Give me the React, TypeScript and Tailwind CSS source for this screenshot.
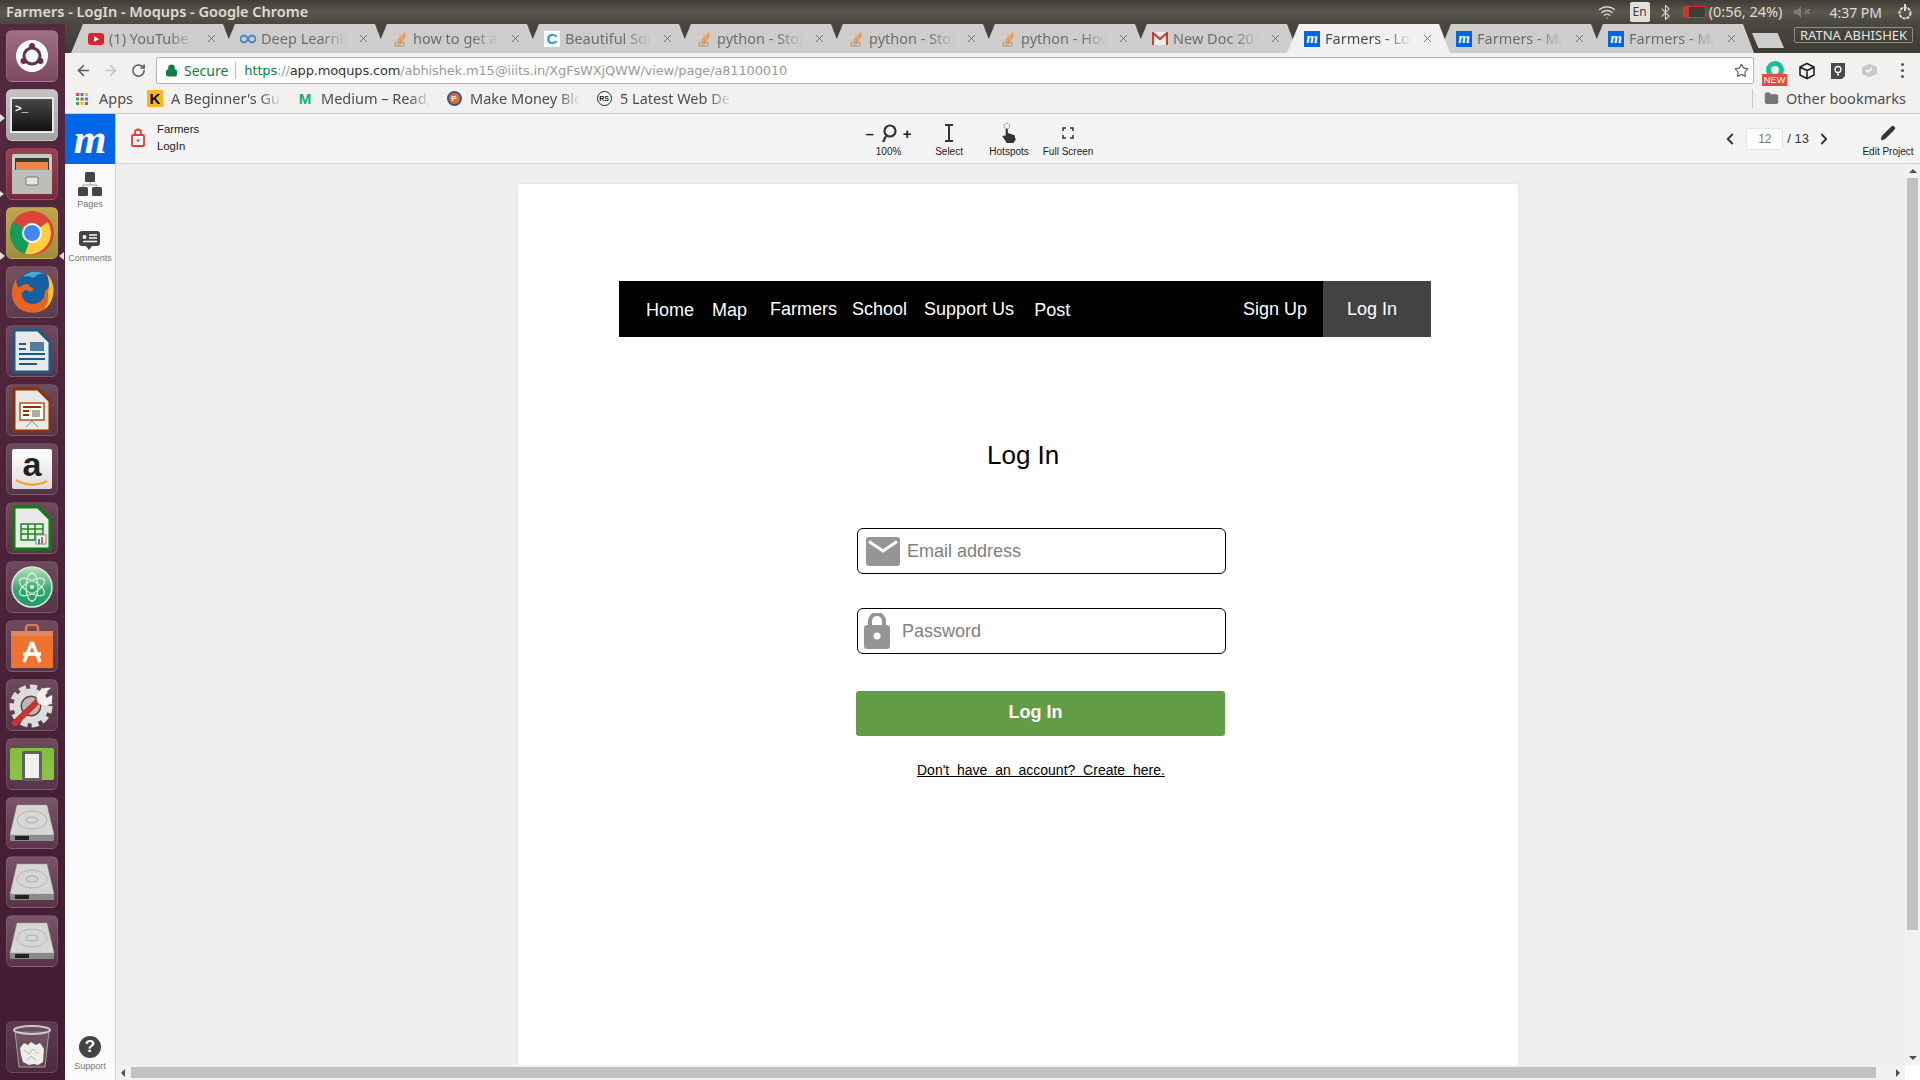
import { ReactNode } from "react";
import {
  ArrowLeft,
  ArrowRight,
  Bluetooth,
  ChevronLeft,
  ChevronRight,
  Folder,
  Lock,
  Pencil,
  RotateCw,
  Star,
  Wifi,
  X,
} from "lucide-react";

const UI_FONT = "font-['Noto_Sans','Open_Sans',sans-serif]";

const Tile = ({ children, bg = "from-[#7a5468] to-[#5a3448]" }: { children: ReactNode; bg?: string }) => (
  <div className={`w-[52px] h-[52px] mb-[7px] rounded-[6px] bg-gradient-to-b ${bg} border border-white/10 flex items-center justify-center overflow-hidden shrink-0`}>
    {children}
  </div>
);

const DiskIcon = () => (
  <svg width="46" height="38" viewBox="0 0 46 38">
    <path d="M8 1h30l7 30H1z" fill="#d6d6d4" stroke="#aaa" strokeWidth=".5" />
    <ellipse cx="23" cy="16" rx="15" ry="9" fill="none" stroke="#b5b5b3" />
    <ellipse cx="23" cy="16" rx="6" ry="3" fill="none" stroke="#a8a8a6" />
    <path d="M1 31h44v5a1 1 0 0 1-1 1H2a1 1 0 0 1-1-1z" fill="#8b8b89" />
    <rect x="6" y="32" width="14" height="4" fill="#222" />
  </svg>
);

const Launcher = () => (
  <div className="w-[65px] shrink-0 bg-gradient-to-b from-[#54293f] to-[#431c31] flex flex-col items-center pt-[6px] pr-[1px] relative">
    <Tile bg="from-[#a06f83] to-[#7d4c62]">
      <svg width="34" height="34" viewBox="0 0 34 34">
        <circle cx="17" cy="17" r="16" fill="#fff" />
        <circle cx="17" cy="17" r="8" fill="none" stroke="#62324a" strokeWidth="3" />
        <circle cx="17" cy="7" r="3" fill="#62324a" />
        <circle cx="8.5" cy="22" r="3" fill="#62324a" />
        <circle cx="25.5" cy="22" r="3" fill="#62324a" />
      </svg>
    </Tile>
    <Tile bg="from-[#c4c4c2] to-[#a3a3a1]">
      <div className="w-[44px] h-[36px] bg-gradient-to-b from-[#4a4a4a] to-[#111] border-2 border-[#e5e5e5] flex items-start p-[3px]">
        <span className="text-white text-[11px] leading-[14px] font-bold font-['Liberation_Mono',monospace]">&gt;_</span>
      </div>
    </Tile>
    <Tile bg="from-[#9a4050] to-[#7b2a3d]">
      <svg width="42" height="42" viewBox="0 0 42 42">
        <rect x="1" y="1" width="40" height="40" rx="2" fill="#c8c8c4" />
        <rect x="4" y="5" width="34" height="12" fill="#3a3a38" />
        <rect x="5" y="9" width="32" height="8" fill="#e98a4c" />
        <rect x="1" y="17" width="40" height="24" fill="#bdbdb9" />
        <rect x="15" y="24" width="12" height="8" rx="1" fill="#e6e6e4" stroke="#777" />
      </svg>
    </Tile>
    <Tile bg="from-[#bda64e] to-[#a08c3e]">
      <svg width="44" height="44" viewBox="0 0 44 44">
        <circle cx="22" cy="22" r="22" fill="#db4437" />
        <path d="M22 22 3 11a22 22 0 0 0 12 32z" fill="#0f9d58" />
        <path d="M22 22 15 43a22 22 0 0 0 26-21 22 22 0 0 0-3-11z" fill="#ffcd40" />
        <circle cx="22" cy="22" r="10" fill="#fff" />
        <circle cx="22" cy="22" r="8" fill="#4285f4" />
      </svg>
    </Tile>
    <Tile bg="from-[#77505f] to-[#5c3b4a]">
      <svg width="46" height="46" viewBox="0 0 46 46">
        <circle cx="25" cy="20" r="18" fill="#17609f" />
        <path d="M14 8c4-5 14-7 21-3-5-1-8 1-10 4-4-2-8-2-11-1z" fill="#4aa5dd" />
        <path d="M7 10C1 20 1 33 11 40c9 6 23 5 29-4 5-7 5-17 1-25 0 5-2 9-5 11 0 8-5 13-12 13-6 0-11-4-11-9 0-3 2-5 5-5l3 2c2-1 4-2 4-3-3-1-5-3-6-5-3 0-7 1-9 4-2-3-3-6-3-9z" fill="#e8641f" />
        <path d="M38 5c5 5 8 13 6 21-1 6-4 11-9 14 4-5 5-11 4-17 2-6 1-12-1-18z" fill="#fcc22e" />
      </svg>
    </Tile>
    <Tile bg="from-[#6f4a5c] to-[#563548]">
      <svg width="40" height="46" viewBox="0 0 40 46">
        <path d="M2 2h24l12 12v30H2z" fill="#e9e9e7" stroke="#1c5a88" strokeWidth="3" />
        <path d="M7 16h7M7 21h7M7 26h26M7 31h26M7 36h18" stroke="#1c5a88" strokeWidth="2" />
        <rect x="18" y="14" width="14" height="9" fill="#4d7ea8" />
      </svg>
    </Tile>
    <Tile bg="from-[#6f4a5c] to-[#563548]">
      <svg width="40" height="46" viewBox="0 0 40 46">
        <path d="M2 2h24l12 12v30H2z" fill="#e9e9e7" stroke="#8b3206" strokeWidth="3" />
        <rect x="8" y="16" width="24" height="17" fill="#fff" stroke="#b5511c" strokeWidth="1.5" />
        <path d="M11 20h18M11 24h6M11 28h6" stroke="#8b3206" strokeWidth="2" />
        <rect x="20" y="23" width="8" height="7" fill="#9fb69a" />
        <path d="M14 40l6-6 6 6" stroke="#888" fill="none" />
      </svg>
    </Tile>
    <Tile bg="from-[#6f4a5c] to-[#563548]">
      <div className="w-[40px] h-[40px] rounded-[2px] bg-gradient-to-b from-white to-[#dcdcdc] flex flex-col items-center">
        <span className="text-[#222] text-[34px] leading-[30px] font-bold font-['Liberation_Sans',sans-serif]">a</span>
        <svg width="36" height="8" viewBox="0 0 36 8">
          <path d="M2 1c9 6 22 6 31 1" stroke="#f90" strokeWidth="2" fill="none" />
        </svg>
      </div>
    </Tile>
    <Tile bg="from-[#6f4a5c] to-[#563548]">
      <svg width="40" height="46" viewBox="0 0 40 46">
        <path d="M2 2h24l12 12v30H2z" fill="#e9e9e7" stroke="#107c10" strokeWidth="3" />
        <path d="M9 19h22v16H9zM9 24h22M9 29h22M16 19v16M23 19v16" fill="none" stroke="#1b8a1b" strokeWidth="1.5" />
        <rect x="24" y="30" width="10" height="9" fill="#fff" stroke="#888" />
        <rect x="26" y="34" width="2" height="5" fill="#2a8ad4" />
        <rect x="29" y="32" width="2" height="7" fill="#e0672a" />
      </svg>
    </Tile>
    <Tile bg="from-[#6f4a5c] to-[#563548]">
      <svg width="42" height="42" viewBox="0 0 42 42">
        <defs>
          <linearGradient id="atomBg" x1="0" y1="0" x2="0" y2="1">
            <stop offset="0" stopColor="#b9e3bd" />
            <stop offset=".6" stopColor="#2fa56d" />
            <stop offset="1" stopColor="#1f9a63" />
          </linearGradient>
        </defs>
        <circle cx="21" cy="21" r="20" fill="url(#atomBg)" stroke="#dfe8e0" strokeWidth="1.5" />
        <g fill="none" stroke="#d5efd9" strokeWidth="1.3">
          <ellipse cx="21" cy="21" rx="14" ry="6" transform="rotate(30 21 21)" />
          <ellipse cx="21" cy="21" rx="14" ry="6" transform="rotate(-30 21 21)" />
          <ellipse cx="21" cy="21" rx="14" ry="6" transform="rotate(90 21 21)" />
        </g>
        <circle cx="21" cy="21" r="2" fill="#e6f5e7" />
      </svg>
    </Tile>
    <Tile bg="from-[#6f4a5c] to-[#563548]">
      <svg width="42" height="44" viewBox="0 0 42 44">
        <path d="M15 10V4a3 3 0 0 1 3-3h6a3 3 0 0 1 3 3v6" fill="none" stroke="#d97a50" strokeWidth="2.5" />
        <rect y="7" width="42" height="37" fill="#f0722f" />
        <rect y="7" width="42" height="5" fill="#e0855c" />
        <path d="M21 18l8 20M21 18l-8 20M12 30h18" stroke="#fff" strokeWidth="3.5" fill="none" />
      </svg>
    </Tile>
    <Tile bg="from-[#6f4a5c] to-[#563548]">
      <svg width="46" height="46" viewBox="0 0 46 46">
        <circle cx="22" cy="24" r="19" fill="none" stroke="#dcdcda" strokeWidth="5" strokeDasharray="7 4" />
        <circle cx="22" cy="24" r="14" fill="none" stroke="#dcdcda" strokeWidth="7" />
        <circle cx="22" cy="24" r="9" fill="#b9b9b7" />
        <path d="M6 41 31 17" stroke="#c9332d" strokeWidth="6" strokeLinecap="round" />
        <path d="M29 21c-4-8 3-17 13-15l-6 5 1 5 6-3c2 8-6 14-14 8z" fill="#f1f1ef" />
      </svg>
    </Tile>
    <Tile bg="from-[#6f4a5c] to-[#563548]">
      <div className="w-[44px] h-[32px] rounded-[2px] bg-gradient-to-b from-[#82bf3d] to-[#8bc34a] flex items-center justify-center overflow-visible">
        <div className="w-[20px] h-[30px] mt-[4px] bg-[#f0f0f0] border-[3px] border-[#616161] rounded-[2px]" />
      </div>
    </Tile>
    <Tile><DiskIcon /></Tile>
    <Tile><DiskIcon /></Tile>
    <Tile><DiskIcon /></Tile>
    <div className="flex-1" />
    <Tile bg="from-[#5f3a4e] to-[#4d2a3d]">
      <svg width="38" height="46" viewBox="0 0 38 46">
        <path d="M2 7l4 36h26l4-36" fill="#ffffff22" stroke="#a89aa0" />
        <ellipse cx="19" cy="6" rx="18" ry="4" fill="#ffffff18" stroke="#c9c6c6" strokeWidth="2" />
        <path d="M7 24l4-5 4 2 3-3 5 3 4-2 4 6-1 13-5 3-4-1-5 1-6-3-2-7z" fill="#ecece9" />
        <path d="M11 26l5 4 4-5 5 5M14 36l4-4 5 4" stroke="#b5b5b2" fill="none" />
      </svg>
    </Tile>
    <div className="absolute left-0 top-[90px] w-0 h-0 border-y-[4px] border-y-transparent border-l-[5px] border-l-[#ddd]" />
    <div className="absolute left-0 top-[167px] w-0 h-0 border-y-[3px] border-y-transparent border-l-[4px] border-l-[#ddd]" />
    <div className="absolute left-0 top-[228px] w-0 h-0 border-y-[4px] border-y-transparent border-l-[5px] border-l-[#ddd]" />
    <div className="absolute right-[1px] top-[228px] w-0 h-0 border-y-[4px] border-y-transparent border-r-[5px] border-r-[#ddd]" />
  </div>
);

const MoqupsFavicon = () => (
  <span className="w-[16px] h-[16px] bg-[#0066e5] flex items-center justify-center text-white text-[15px] leading-none italic font-bold font-['Liberation_Serif',serif]">m</span>
);

const SoFavicon = () => (
  <svg width="14" height="16" viewBox="0 0 14 16">
    <path d="M2 10v5h9v-5" fill="none" stroke="#b8a88f" strokeWidth="1.3" />
    <path d="M4 12.5h5M4.2 10.2l5 .8M5 7.8l4.6 2M6.5 5.4l4 3M8.6 3.2l2.8 4M11 1.5l1.3 4.6" stroke="#ee8a3a" strokeWidth="1.3" />
  </svg>
);

const tabs: { title: string; icon: ReactNode; active?: boolean }[] = [
  {
    title: "(1) YouTube",
    icon: (
      <span className="w-[16px] h-[12px] rounded-[3px] bg-[#d9252a] flex items-center justify-center">
        <span className="w-0 h-0 border-y-[3px] border-y-transparent border-l-[5px] border-l-white" />
      </span>
    ),
  },
  {
    title: "Deep Learning",
    icon: (
      <svg width="16" height="10" viewBox="0 0 16 10">
        <path d="M8 5C6.5 2.5 5.5 1.5 4 1.5a3.5 3.5 0 0 0 0 7c1.500 0 2.500-1 4-3.500s2.500-3.500 4-3.500a3.500 3.500 0 0 1 0 7c-1.500 0-2.500-1-4-3.500z" fill="none" stroke="#3f86c8" strokeWidth="1.800" />
      </svg>
    ),
  },
  { title: "how to get a link", icon: <SoFavicon /> },
  {
    title: "Beautiful Soup",
    icon: (
      <span className="w-[16px] h-[16px] bg-white flex items-center justify-center text-[#1c9ad6] text-[15px] leading-none font-bold font-['Liberation_Sans',sans-serif]">C</span>
    ),
  },
  { title: "python - Stop", icon: <SoFavicon /> },
  { title: "python - Store", icon: <SoFavicon /> },
  { title: "python - How", icon: <SoFavicon /> },
  {
    title: "New Doc 2017",
    icon: (
      <svg width="16" height="13" viewBox="0 0 16 13">
        <rect width="16" height="13" fill="#eee" />
        <path d="M1 13V1l7 6 7-6v12" fill="none" stroke="#cc3b2f" strokeWidth="2.200" />
      </svg>
    ),
  },
  { title: "Farmers - LogIn", icon: <MoqupsFavicon />, active: true },
  { title: "Farmers - Map", icon: <MoqupsFavicon /> },
  { title: "Farmers - Map", icon: <MoqupsFavicon /> },
];

const TopBar = () => (
  <div className={`h-[24px] shrink-0 bg-gradient-to-b from-[#3f3d37] via-[#5a574b] to-[#49473e] flex items-center pl-[6px] pr-[6px] text-[#dfdbd2] ${UI_FONT}`}>
    <span className="text-[14.500px] font-semibold">Farmers - LogIn - Moqups - Google Chrome</span>
    <div className="ml-auto flex items-center">
      <Wifi className="w-[18px] h-[18px] text-[#d8d5cc]" strokeWidth={1.800} />
      <span className="ml-[14px] w-[20px] h-[20px] rounded-[2px] bg-[#e3e0d8] text-[#3c3b37] text-[12px] flex items-center justify-center">En</span>
      <Bluetooth className="ml-[7px] w-[17px] h-[17px] text-[#d8d5cc]" strokeWidth={1.600} />
      <span className="ml-[9px] w-[23px] h-[12px] rounded-[2px] border-[1.5px] border-[#d8342a] bg-gradient-to-r from-[#c0392b] via-[#c0392b] via-25% to-[#3f3d37] to-25%" />
      <span className="ml-[3px] text-[14.500px]">(0:56, 24%)</span>
      <svg className="ml-[12px]" width="18" height="12" viewBox="0 0 18 12" fill="#7f7d74">
        <path d="M0 4h3l4-4v12l-4-4H0z" />
        <path d="m11 3 5 5m0-5-5 5" stroke="#7f7d74" strokeWidth="1.500" />
      </svg>
      <span className="ml-[17px] text-[14px]">4:37 PM</span>
      <svg className="ml-[14px]" width="18" height="18" viewBox="0 0 18 18" fill="none" stroke="#dfdbd2" strokeWidth="2">
        <circle cx="9" cy="10" r="5.500" strokeDasharray="3 1" />
        <path d="M9 1v7" />
      </svg>
    </div>
  </div>
);

const TabStrip = () => (
  <div className={`h-[29px] shrink-0 bg-gradient-to-b from-[#4a483f] to-[#3c3b35] flex items-stretch pl-[6px] ${UI_FONT}`}>
    {tabs.map((tab, i) => (
      <div
        key={i}
        className={`w-[163px] shrink-0 ${i > 0 ? "-ml-[11px]" : ""} ${tab.active ? "bg-[#f2f1f0] z-10" : "bg-[#cfcdcb]"} [clip-path:polygon(0_100%,12px_0,calc(100%-11px)_0,100%_100%)] flex items-center pl-[17px]`}
      >
        <span className="w-[16px] shrink-0 flex justify-center">{tab.icon}</span>
        <span className={`ml-[5px] w-[86px] whitespace-nowrap overflow-hidden text-[14.500px] [mask-image:linear-gradient(to_right,black_70%,transparent)] ${tab.active ? "text-[#4e4e4e]" : "text-[#6d6d6d]"}`}>
          {tab.title}
        </span>
        <X className="ml-[10px] w-[13px] h-[13px] text-[#6f6f6f]" strokeWidth={1.800} />
      </div>
    ))}
    <div className="-ml-[2px] mt-[9px] w-[32px] h-[15px] bg-[#cfcdcb] [clip-path:polygon(0_0,80%_0,100%_100%,20%_100%)]" />
    <div className="ml-[10px] mt-[3px] w-[119px] h-[16px] border border-[#8f8d85] rounded-[2px] text-[#e8e6df] text-[13px] leading-[14px] flex items-center justify-center">
      RATNA ABHISHEK
    </div>
  </div>
);

const Toolbar = () => (
  <div className="h-[32px] shrink-0 bg-[#f2f1f0] flex items-start pt-[4px]">
    <ArrowLeft className="ml-[10px] mt-[5px] w-[17px] h-[17px] text-[#5a5a5a]" strokeWidth={2.200} />
    <ArrowRight className="ml-[10px] mt-[5px] w-[17px] h-[17px] text-[#c4c4c4]" strokeWidth={2.200} />
    <RotateCw className="ml-[12px] mt-[6px] w-[15px] h-[15px] text-[#5a5a5a]" strokeWidth={2.400} />
    <div className="ml-[10px] w-[1598px] h-[27px] bg-white border border-[#b5b3b1] rounded-[2px] flex items-center pl-[8px]">
      <Lock className="w-[13px] h-[13px] text-[#0b8043]" fill="#0b8043" strokeWidth={2} />
      <span className={`ml-[6px] text-[14px] text-[#0b8043] ${UI_FONT}`}>Secure</span>
      <span className="ml-[7px] w-px h-[17px] bg-[#bbb]" />
      <span className="ml-[8px] text-[13px] font-['DejaVu_Sans',sans-serif] whitespace-nowrap tracking-[-0.15px] text-[#9a9a9a]">
        <span className="text-[#0b8043]">https</span>://<span className="text-[#333]">app.moqups.com</span>/abhishek.m15@iiits.in/XgFsWXjQWW/view/page/a81100010
      </span>
      <Star className="ml-auto mr-[4px] w-[15px] h-[15px] text-[#666]" strokeWidth={2} />
    </div>
    <div className="ml-[8px] mt-[1px] relative w-[26px] h-[26px] flex justify-center">
      <span className="mt-[3px] w-[18px] h-[18px] rounded-full border-[5px] border-[#15c39a]" />
      <span className="absolute left-0 bottom-[-2px] w-[25px] h-[12px] bg-[#e8493b] text-white text-[9.500px] leading-[12px] text-center font-['Liberation_Sans',sans-serif]">NEW</span>
    </div>
    <svg className="ml-[10px] mt-[5px]" width="18" height="18" viewBox="0 0 18 18" fill="none" stroke="#222" strokeWidth="1.600">
      <path d="M9 1.500 16 5v8l-7 3.500L2 13V5zM2 5l7 3.500L16 5M9 8.500v8" />
    </svg>
    <svg className="ml-[14px] mt-[5px]" width="16" height="18" viewBox="0 0 16 18">
      <path d="M1 1h14v13l-3 3H1z" fill="#4a4a4a" />
      <circle cx="8" cy="7.500" r="3" fill="none" stroke="#fff" strokeWidth="1.300" />
      <path d="M7 11.500h2v2H7z" fill="#fff" />
    </svg>
    <svg className="ml-[15px] mt-[6px]" width="17" height="15" viewBox="0 0 17 15">
      <path d="M1 4 8.500 1 16 4v7l-7.500 3L1 11z" fill="#c9c9c9" />
      <path d="m5 7 2 2 4-4" fill="none" stroke="#fff" strokeWidth="1.500" />
    </svg>
    <div className="ml-[23px] mt-[6px] flex flex-col gap-[3px]">
      <span className="w-[3px] h-[3px] rounded-full bg-[#555]" />
      <span className="w-[3px] h-[3px] rounded-full bg-[#555]" />
      <span className="w-[3px] h-[3px] rounded-full bg-[#555]" />
    </div>
  </div>
);

const Bookmark = ({ icon, label, width }: { icon: ReactNode; label: string; width: number }) => (
  <div className="flex items-center pr-[14px]" style={{ width }}>
    <span className="w-[18px] flex justify-center shrink-0">{icon}</span>
    <span className="ml-[7px] flex-1 whitespace-nowrap overflow-hidden text-[14.500px] text-[#4d4d4d] [mask-image:linear-gradient(to_right,black_80%,transparent)]">{label}</span>
  </div>
);

const AppsGrid = () => (
  <svg width="12" height="12" viewBox="0 0 12 12">
    {[0, 1, 2].map((r) =>
      [0, 1, 2].map((c) => (
        <rect
          key={`${r}${c}`}
          x={c * 4.500}
          y={r * 4.500}
          width="3"
          height="3"
          fill={["#ea4335", "#4285f4", "#fbbc05", "#34a853", "#ea4335", "#4285f4", "#34a853", "#fbbc05", "#ea4335"][r * 3 + c]}
        />
      ))
    )}
  </svg>
);

const BookmarksBar = () => (
  <div className={`h-[29px] shrink-0 bg-[#f2f1f0] border-b border-[#cfcdcb] flex items-center pl-[8px] pb-[1px] ${UI_FONT}`}>
    <div className="flex items-center w-[73px]">
      <span className="ml-[3px]"><AppsGrid /></span>
      <span className="ml-[11px] text-[14.500px] text-[#4d4d4d]">Apps</span>
    </div>
    <Bookmark
      width={150}
      label="A Beginner's Guide"
      icon={<span className="w-[16px] h-[17px] bg-[#f5b81c] text-black text-[15px] leading-[17px] text-center font-bold font-['Liberation_Sans',sans-serif]">K</span>}
    />
    <Bookmark
      width={149}
      label="Medium – Read, write"
      icon={<span className="text-[#02b875] text-[15px] leading-none font-bold font-['Liberation_Sans',sans-serif]">M</span>}
    />
    <Bookmark
      width={150}
      label="Make Money Blog"
      icon={<span className="w-[15px] h-[15px] rounded-full border-2 border-[#2d5a8c] bg-[#e86a2c] text-white text-[8px] leading-[11px] text-center font-bold font-['Liberation_Sans',sans-serif]">P</span>}
    />
    <Bookmark
      width={150}
      label="5 Latest Web Dev"
      icon={<span className="w-[15px] h-[15px] rounded-full border border-[#222] bg-white text-[#111] text-[7px] leading-[13px] text-center font-bold font-['Liberation_Sans',sans-serif]">RS</span>}
    />
    <div className="ml-auto flex items-center pr-[14px]">
      <span className="w-px h-[19px] bg-[#c9c7c5] mr-[11px]" />
      <Folder className="w-[15px] h-[15px] text-[#757575]" fill="#757575" strokeWidth={1.500} />
      <span className="ml-[7px] text-[14.500px] text-[#4d4d4d]">Other bookmarks</span>
    </div>
  </div>
);

const ToolItem = ({ icon, label, width }: { icon: ReactNode; label: string; width: number }) => (
  <div className="flex flex-col items-center" style={{ width }}>
    <div className="h-[22px] flex items-center justify-center">{icon}</div>
    <span className="mt-[2px] text-[10px] leading-[12px] text-[#222] whitespace-nowrap">{label}</span>
  </div>
);

const AppHeader = () => (
  <div className="h-[50px] shrink-0 bg-[#f4f4f4] border-b border-[#d4d4d4] flex items-start font-['Liberation_Sans',sans-serif]">
    <svg className="ml-[15px] mt-[14px]" width="14" height="19" viewBox="0 0 14 19" fill="none" stroke="#e0402f" strokeWidth="1.800">
      <path d="M4 7V4.500a3 3 0 0 1 6 0V6" />
      <rect x="1" y="7" width="12" height="11" rx="1" />
      <circle cx="7" cy="12.500" r="1.200" fill="#e0402f" stroke="none" />
    </svg>
    <div className="ml-[12px] mt-[7px] text-[11.300px] leading-[17px] text-[#222]">
      <div>Farmers</div>
      <div>LogIn</div>
    </div>
    <div className="ml-[659px] mt-[8px] flex items-start">
      <ToolItem
        width={61}
        label="100%"
        icon={
          <div className="flex items-center gap-[6px] text-[#222]">
            <span className="text-[15px] leading-none font-bold">–</span>
            <svg width="17" height="19" viewBox="0 0 17 19" fill="none" stroke="#333" strokeWidth="2.200">
              <circle cx="10" cy="7" r="5.500" />
              <path d="M6 12 3 18" />
            </svg>
            <span className="text-[15px] leading-none font-bold">+</span>
          </div>
        }
      />
      <ToolItem
        width={60}
        label="Select"
        icon={
          <svg width="10" height="18" viewBox="0 0 10 18" fill="none" stroke="#333" strokeWidth="2">
            <path d="M1 1h8M1 17h8M5 1v16" />
          </svg>
        }
      />
      <ToolItem
        width={60}
        label="Hotspots"
        icon={
          <svg width="16" height="20" viewBox="0 0 14 18" fill="#333">
            <path d="M4 6a1 1 0 0 1 2 0v3l6 2 1 4-2 3H5L1 12l2-1 1 1z" />
            <circle cx="5" cy="3" r="2.500" fill="none" stroke="#555" strokeWidth=".8" strokeDasharray="1 1" />
          </svg>
        }
      />
      <ToolItem
        width={58}
        label="Full Screen"
        icon={
          <svg width="12" height="12" viewBox="0 0 12 12" fill="none" stroke="#333" strokeWidth="1.500">
            <path d="M1 4V1h3M8 1h3v3M11 8v3H8M4 11H1V8" />
          </svg>
        }
      />
    </div>
    <div className="ml-auto mt-[14px] flex items-center text-[12px] text-[#333]">
      <ChevronLeft className="w-[18px] h-[18px] text-[#333]" strokeWidth={2.400} />
      <span className="ml-[7px] w-[37px] h-[22px] bg-white border border-[#e4e4e4] rounded-[3px] text-[#777] flex items-center justify-center">12</span>
      <span className="ml-[4px] text-[13px]">/ 13</span>
      <ChevronRight className="ml-[6px] w-[18px] h-[18px] text-[#333]" strokeWidth={2.400} />
    </div>
    <div className="ml-[29px] mr-[6px] mt-[8px]">
      <ToolItem width={52} label="Edit Project" icon={<Pencil className="w-[16px] h-[16px] text-[#333]" fill="#333" strokeWidth={1.500} />} />
    </div>
  </div>
);

const RailItem = ({ icon, label }: { icon: ReactNode; label: string }) => (
  <div className="flex flex-col items-center">
    {icon}
    <span className="mt-[3px] text-[9px] leading-[11px] text-[#777]">{label}</span>
  </div>
);

const Rail = () => (
  <div className="w-[51px] shrink-0 bg-[#fafafa] border-r border-[#d4d4d4] flex flex-col items-center font-['Liberation_Sans',sans-serif]">
    <div className="w-[50px] h-[50px] shrink-0 bg-[#0066e5] flex items-center justify-center text-white text-[42px] leading-none italic font-bold font-['Liberation_Serif',serif]">m</div>
    <div className="mt-[8px]">
      <RailItem
        label="Pages"
        icon={
          <svg width="24" height="24" viewBox="0 0 24 24" fill="#444">
            <rect x="7" y="0" width="10" height="10" rx="1.500" />
            <rect x="0" y="15" width="10" height="9" rx="1.500" />
            <rect x="14" y="15" width="10" height="9" rx="1.500" />
            <path d="M12 10v3M5 15v-2h14v2" fill="none" stroke="#888" strokeWidth=".8" />
          </svg>
        }
      />
    </div>
    <div className="mt-[21px]">
      <RailItem
        label="Comments"
        icon={
          <svg width="21" height="19" viewBox="0 0 21 19" fill="#444">
            <path d="M3 0h15a3 3 0 0 1 3 3v9a3 3 0 0 1-3 3h-5l-3 4-3-4H3a3 3 0 0 1-3-3V3a3 3 0 0 1 3-3z" />
            <circle cx="5.500" cy="6" r="2" fill="#fafafa" />
            <path d="M10 4h8M10 7h8M4 10.500h14" stroke="#fafafa" strokeWidth="1.300" />
          </svg>
        }
      />
    </div>
    <div className="mt-auto mb-[8px]">
      <RailItem
        label="Support"
        icon={
          <span className="w-[22px] h-[22px] rounded-full bg-[#444] text-white text-[17px] leading-[22px] text-center font-bold">?</span>
        }
      />
    </div>
  </div>
);

const LoginCanvas = () => (
  <div className="ml-[402px] mt-[20px] w-[1000px] bg-white shadow-[0_0_2px_rgba(0,0,0,0.12)] rounded-t-[2px] flex flex-col pt-[97px] pl-[101px] font-['Liberation_Sans',sans-serif]">
    <nav className="w-[812px] h-[56px] bg-black flex text-white text-[18px] shrink-0">
      <div className="flex items-center pl-[27px] flex-1">
        <a className="mt-[2px]">Home</a>
        <a className="ml-[18px] mt-[2px]">Map</a>
        <a className="ml-[23px]">Farmers</a>
        <a className="ml-[15px]">School</a>
        <a className="ml-[17px]">Support Us</a>
        <a className="ml-[20px] mt-[2px]">Post</a>
        <a className="ml-auto mr-[16px]">Sign Up</a>
      </div>
      <a className="w-[108px] bg-[#434343] flex items-center justify-center pr-[10px]">Log In</a>
    </nav>
    <h1 className="ml-[368px] mt-[103px] text-[26px] leading-[30px] text-black">Log In</h1>
    <div className="ml-[237px] mt-[58px] w-[370px] flex flex-col">
      <div className="ml-[1px] w-[369px] h-[46px] border border-black rounded-[6px] flex items-center pl-[8px]">
        <svg width="34" height="29" viewBox="0 0 34 29">
          <rect width="34" height="29" rx="3" fill="#959595" />
          <path d="M3 4.500 17 14 31 4.500" fill="none" stroke="#fff" strokeWidth="3" />
        </svg>
        <input readOnly placeholder="Email address" className="ml-[7px] flex-1 min-w-0 text-[18px] outline-none placeholder:text-[#808080]" />
      </div>
      <div className="ml-[1px] mt-[34px] w-[369px] h-[46px] border border-black rounded-[6px] flex items-center pl-[6px]">
        <svg className="-mt-[1px]" width="26" height="36" viewBox="0 0 26 36">
          <path d="M6 14V8a7 7 0 0 1 14 0v6" fill="none" stroke="#959595" strokeWidth="4" />
          <rect y="12" width="26" height="24" rx="3" fill="#959595" />
          <circle cx="13" cy="23" r="3.500" fill="#fff" />
        </svg>
        <input readOnly placeholder="Password" className="ml-[12px] flex-1 min-w-0 text-[18px] outline-none placeholder:text-[#808080]" />
      </div>
      <button className="mt-[37px] w-[369px] h-[45px] rounded-[3px] bg-[#629c44] text-white text-[18px] font-bold pr-[10px] pb-[2px]">Log In</button>
      <a className="mt-[25px] ml-[61px] text-[14px] leading-[18px] text-black underline whitespace-pre">Don't  have  an  account?  Create  here.</a>
    </div>
  </div>
);

const Scrollbars = {
  Vertical: () => (
    <div className="w-[15px] shrink-0 bg-[#f1f1f1] flex flex-col items-center">
      <span className="mt-[5px] w-0 h-0 border-x-[4px] border-x-transparent border-b-[4px] border-b-[#505050]" />
      <span className="mt-[5px] w-[11px] h-[752px] bg-[#c1c1c1]" />
      <span className="mt-auto mb-[5px] w-0 h-0 border-x-[4px] border-x-transparent border-t-[4px] border-t-[#505050]" />
    </div>
  ),
  Horizontal: () => (
    <div className="h-[15px] shrink-0 flex">
      <div className="flex-1 bg-[#f1f1f1] flex items-center pl-[5px]">
        <span className="w-0 h-0 border-y-[4px] border-y-transparent border-r-[4px] border-r-[#505050]" />
        <span className="ml-[6px] w-[1745px] h-[11px] bg-[#c1c1c1]" />
        <span className="ml-auto mr-[5px] w-0 h-0 border-y-[4px] border-y-transparent border-l-[4px] border-l-[#505050]" />
      </div>
      <div className="w-[15px] bg-white" />
    </div>
  ),
};

export default function App() {
  return (
    <div className="w-[1920px] h-[1080px] overflow-hidden flex flex-col bg-[#eeeeee]">
      <TopBar />
      <div className="flex-1 min-h-0 flex">
        <Launcher />
        <div className="flex-1 min-w-0 flex flex-col">
          <TabStrip />
          <Toolbar />
          <BookmarksBar />
          <div className="flex-1 min-h-0 flex">
            <Rail />
            <div className="flex-1 min-w-0 flex flex-col">
              <AppHeader />
              <div className="flex-1 min-h-0 flex">
                <div className="flex-1 min-w-0 flex items-stretch">
                  <LoginCanvas />
                </div>
                <Scrollbars.Vertical />
              </div>
              <Scrollbars.Horizontal />
            </div>
          </div>
        </div>
      </div>
    </div>
  );
}
